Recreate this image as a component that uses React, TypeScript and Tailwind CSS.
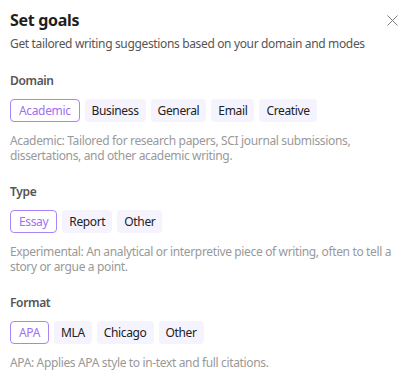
import React from "react";

type Section = { label: string; options: string[]; selected: string; desc: string };

const sections: Section[] = [
  {
    label: "Domain",
    options: ["Academic", "Business", "General", "Email", "Creative"],
    selected: "Academic",
    desc: "Academic: Tailored for research papers, SCI journal submissions, dissertations, and other academic writing.",
  },
  {
    label: "Type",
    options: ["Essay", "Report", "Other"],
    selected: "Essay",
    desc: "Experimental: An analytical or interpretive piece of writing, often to tell a story or argue a point.",
  },
  {
    label: "Format",
    options: ["APA", "MLA", "Chicago", "Other"],
    selected: "APA",
    desc: "APA: Applies APA style to in-text and full citations.",
  },
];

export default function App() {
  return (
    <div
      className="w-[410px] h-[376px] bg-white overflow-hidden px-[10px] pt-[8px] tracking-[-0.35px]"
      style={{ fontFamily: '"Noto Sans", "Open Sans", sans-serif' }}
    >
      <div className="flex items-center justify-between h-[24px]">
        <h1 className="text-[16px] font-bold text-[#1f1f1f] leading-[24px] tracking-[-0.3px]">Set goals</h1>
        <svg width="11" height="11" viewBox="0 0 11 11" className="mr-[2px]">
          <path d="M0.5 0.5 L10.5 10.5 M10.5 0.5 L0.5 10.5" stroke="#7a7a7a" strokeWidth="1" />
        </svg>
      </div>
      <p className="mt-[4px] text-[12px] leading-[16px] text-[#555]">
        Get tailored writing suggestions based on your domain and modes
      </p>
      {sections.map((s) => (
        <div key={s.label} className="mt-[21px]">
          <div className="text-[12px] leading-[16px] font-semibold text-[#555]">{s.label}</div>
          <div className="mt-[10px] flex gap-[5px]">
            {s.options.map((o) => (
              <div
                key={o}
                className={
                  o === s.selected
                    ? "h-[23px] px-[8px] flex items-center rounded-[4px] border border-[#a885f7] text-[#a070f5] text-[12px]"
                    : "h-[23px] px-[7px] flex items-center rounded-[4px] bg-[#f5f3fe] text-[#222] text-[12px]"
                }
              >
                {o}
              </div>
            ))}
          </div>
          <p className="mt-[11px] text-[12px] leading-[15px] text-[#999]">{s.desc}</p>
        </div>
      ))}
    </div>
  );
}
